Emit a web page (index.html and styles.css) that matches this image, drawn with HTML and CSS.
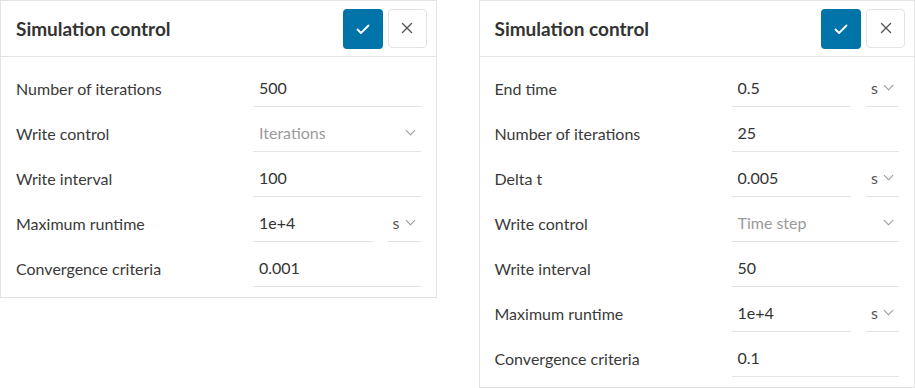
FILE: index.html
```html
<!DOCTYPE html>
<html>
<head>
    <title>Simulation control</title>
    <link rel="stylesheet" href="styles.css">
</head>
<body>
    <div class="page">
        <div class="panel">
            <div class="panel-header">
                <h2>Simulation control</h2>
                <div class="actions">
                    <button class="btn btn-ok" title="Save">
                        <svg width="16" height="16" viewBox="0 0 16 16"><path d="M2.5 8.5l3.5 3.5 7.5-7.5" fill="none" stroke="#fff" stroke-width="1.8" stroke-linecap="round" stroke-linejoin="round"/></svg>
                    </button>
                    <button class="btn btn-close" title="Close">
                        <svg width="12" height="12" viewBox="0 0 12 12"><path d="M1.5 1.5l9 9M10.5 1.5l-9 9" fill="none" stroke="#555" stroke-width="1.4" stroke-linecap="round"/></svg>
                    </button>
                </div>
            </div>
            <div class="panel-body">
                <div class="row">
                    <label>Number of iterations</label>
                    <div class="field"><span class="value">500</span></div>
                </div>
                <div class="row">
                    <label>Write control</label>
                    <div class="field select"><span class="value muted">Iterations</span><span class="chevron"></span></div>
                </div>
                <div class="row">
                    <label>Write interval</label>
                    <div class="field"><span class="value">100</span></div>
                </div>
                <div class="row">
                    <label>Maximum runtime</label>
                    <div class="field-group">
                        <div class="field"><span class="value">1e+4</span></div>
                        <div class="field unit"><span class="value">s</span><span class="chevron"></span></div>
                    </div>
                </div>
                <div class="row">
                    <label>Convergence criteria</label>
                    <div class="field"><span class="value">0.001</span></div>
                </div>
            </div>
        </div>

        <div class="panel">
            <div class="panel-header">
                <h2>Simulation control</h2>
                <div class="actions">
                    <button class="btn btn-ok" title="Save">
                        <svg width="16" height="16" viewBox="0 0 16 16"><path d="M2.5 8.5l3.5 3.5 7.5-7.5" fill="none" stroke="#fff" stroke-width="1.8" stroke-linecap="round" stroke-linejoin="round"/></svg>
                    </button>
                    <button class="btn btn-close" title="Close">
                        <svg width="12" height="12" viewBox="0 0 12 12"><path d="M1.5 1.5l9 9M10.5 1.5l-9 9" fill="none" stroke="#555" stroke-width="1.4" stroke-linecap="round"/></svg>
                    </button>
                </div>
            </div>
            <div class="panel-body">
                <div class="row">
                    <label>End time</label>
                    <div class="field-group">
                        <div class="field"><span class="value">0.5</span></div>
                        <div class="field unit"><span class="value">s</span><span class="chevron"></span></div>
                    </div>
                </div>
                <div class="row">
                    <label>Number of iterations</label>
                    <div class="field"><span class="value">25</span></div>
                </div>
                <div class="row">
                    <label>Delta t</label>
                    <div class="field-group">
                        <div class="field"><span class="value">0.005</span></div>
                        <div class="field unit"><span class="value">s</span><span class="chevron"></span></div>
                    </div>
                </div>
                <div class="row">
                    <label>Write control</label>
                    <div class="field select"><span class="value muted">Time step</span><span class="chevron"></span></div>
                </div>
                <div class="row">
                    <label>Write interval</label>
                    <div class="field"><span class="value">50</span></div>
                </div>
                <div class="row">
                    <label>Maximum runtime</label>
                    <div class="field-group">
                        <div class="field"><span class="value">1e+4</span></div>
                        <div class="field unit"><span class="value">s</span><span class="chevron"></span></div>
                    </div>
                </div>
                <div class="row">
                    <label>Convergence criteria</label>
                    <div class="field"><span class="value">0.1</span></div>
                </div>
            </div>
        </div>
    </div>
</body>
</html>
```

FILE: styles.css
```css
body {
    font-family: Lato, "Open Sans", sans-serif;
    background-color: #fff;
    color: #333;
    margin: 0;
}

.page {
    display: flex;
    align-items: flex-start;
    gap: 42px;
}

.panel {
    width: 435px;
    border: 1px solid #e3e3e3;
    background-color: #fff;
}

.panel-header {
    display: flex;
    align-items: center;
    justify-content: space-between;
    height: 55px;
    padding: 0 9px 0 15px;
    border-bottom: 1px solid #e3e3e3;
}

.panel-header h2 {
    margin: 0 0 1px 0;
    font-size: 19px;
    font-weight: bold;
    color: #333;
}

.actions {
    display: flex;
    gap: 5px;
}

.btn {
    display: flex;
    align-items: center;
    justify-content: center;
    width: 40px;
    height: 40px;
    padding: 0;
    border-radius: 4px;
    cursor: pointer;
}

.btn-ok {
    background-color: #0074a8;
    border: none;
}

.btn-close {
    width: 39px;
    height: 39px;
    background-color: #fff;
    border: 1px solid #e3e3e3;
}

.panel-body {
    padding: 5px 15px 10px 15px;
}

.row {
    display: grid;
    grid-template-columns: 237px 1fr;
    align-items: center;
    padding-top: 9px;
}

.row label {
    font-size: 16px;
    color: #3a3a3a;
    margin-bottom: 2px;
}

.field {
    display: flex;
    align-items: center;
    justify-content: space-between;
    box-sizing: border-box;
    height: 36px;
    padding: 0 5px 2px 6px;
    border-bottom: 1px solid #e3e3e3;
    font-size: 16px;
}

.field .muted {
    color: #9a9a9a;
}

.field-group {
    display: flex;
    gap: 15px;
}

.field-group .field {
    flex: 1;
}

.field-group .field.unit {
    flex: 0 0 33px;
    padding: 0 5px 2px 5px;
    color: #555;
}

.chevron {
    width: 6px;
    height: 6px;
    margin: 0 2px 4px 0;
    border-right: 1px solid #999;
    border-bottom: 1px solid #999;
    transform: rotate(45deg);
}
```
